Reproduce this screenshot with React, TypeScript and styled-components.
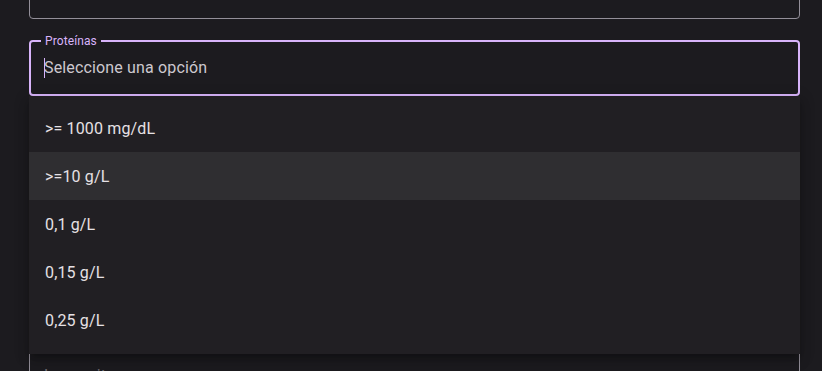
import React from "react";
import styled, { createGlobalStyle } from "styled-components";

const Global = createGlobalStyle`
  html, body { margin: 0; padding: 0; background: #1c1b1f; overflow: hidden; }
  body { font-family: Roboto, "Noto Sans", "Liberation Sans", sans-serif; }
`;

const Page = styled.div`
  display: flex;
  flex-direction: column;
  gap: 21px;
  padding: 0 22px 0 29px;
  margin-top: -37px;
  height: 408px;
`;

const FieldBox = styled.div<{ $focused?: boolean }>`
  position: relative;
  height: 56px;
  box-sizing: border-box;
  border-radius: 4px;
  border: ${(p) => (p.$focused ? "2px solid #d8b4fa" : "1px solid #938f99")};
  padding: 0 ${(p) => (p.$focused ? "13px" : "14px")};
  display: flex;
  align-items: center;
  flex-shrink: 0;
`;

const Legend = styled.span`
  position: absolute;
  top: -9px;
  left: 10px;
  padding: 0 4px;
  background: #1c1b1f;
  color: #d8b4fa;
  font-size: 12px;
  line-height: 16px;
  letter-spacing: 0.1px;
`;

const Value = styled.span<{ $muted?: boolean }>`
  font-size: 16px;
  line-height: 24px;
  color: ${(p) => (p.$muted ? "#6f6b73" : "#cdc8cf")};
  letter-spacing: 0.15px;
  position: relative;
`;

const Caret = styled.span`
  position: absolute;
  left: 0;
  top: 2px;
  width: 1px;
  height: 20px;
  background: #d8b4fa;
`;

const Menu = styled.ul`
  position: absolute;
  top: calc(100% + 2px);
  left: -2px;
  right: -2px;
  margin: 0;
  padding: 8px 0 10px;
  list-style: none;
  background: #211f23;
  box-shadow: 0 5px 5px -3px rgba(0,0,0,0.2), 0 8px 10px 1px rgba(0,0,0,0.14), 0 3px 14px 2px rgba(0,0,0,0.12);
  z-index: 10;
`;

const Item = styled.li<{ $active?: boolean }>`
  height: 48px;
  display: flex;
  align-items: center;
  padding: 0 16px;
  font-size: 16px;
  color: #e6e1e5;
  letter-spacing: 0.15px;
  background: ${(p) => (p.$active ? "#2f2e31" : "transparent")};
`;

const options = [">= 1000 mg/dL", ">=10 g/L", "0,1 g/L", "0,15 g/L", "0,25 g/L"];

export default function App() {
  return (
    <>
      <Global />
      <Page>
        <FieldBox>
          <Value>, g/L</Value>
        </FieldBox>
        <FieldBox $focused>
          <Legend>Proteínas</Legend>
          <Value>
            <Caret />
            Seleccione una opción
          </Value>
          <Menu>
            {options.map((o, i) => (
              <Item key={o} $active={i === 1}>
                {o}
              </Item>
            ))}
          </Menu>
        </FieldBox>
        <FieldBox />
        <FieldBox />
        <FieldBox />
        <FieldBox>
          <Value $muted>Leucocitos</Value>
        </FieldBox>
      </Page>
    </>
  );
}
